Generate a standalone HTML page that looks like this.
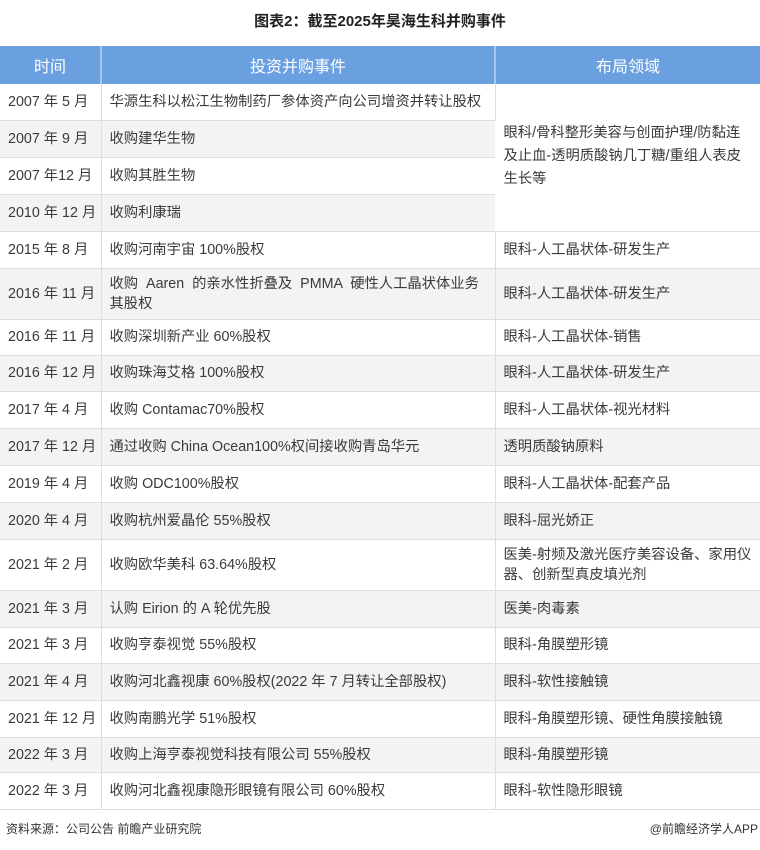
<!DOCTYPE html>
<html><head><meta charset="utf-8"><style>
body{margin:0;width:760px;height:850px;background:#fff;font-family:"Liberation Sans","Noto Sans CJK SC",sans-serif;color:#3a3a3a;position:relative;overflow:hidden}
h1{position:absolute;top:10px;left:0;width:760px;text-align:center;font-size:15px;font-weight:bold;margin:0;color:#222;font-family:"Liberation Sans","Noto Sans CJK SC",sans-serif}
table{position:absolute;top:46px;left:0;width:760px;border-collapse:collapse;font-size:14.3px;table-layout:fixed}
th{background:#6a9fe0;color:#fff;font-weight:normal;font-size:16px;height:36px;border-right:2px solid #a9c8ee}
th:last-child{border-right:none}
td{border-bottom:1px solid #dedede;border-right:1px solid #dedede;padding:0 8px;line-height:20px}
td:last-child{border-right:none}
td.t{padding:0 0 0 8px;white-space:nowrap}
td.n{white-space:nowrap;padding-right:0}
tr.g td{background:#f3f3f3}
td.m{background:#fff!important;vertical-align:top;padding-top:38px;padding-right:4px;line-height:23px;white-space:nowrap}
.f{position:absolute;top:820px;font-size:12px;color:#333}
</style></head><body>
<h1>图表2：截至2025年昊海生科并购事件</h1>
<table>
<colgroup><col style="width:101px"><col style="width:394px"><col style="width:265px"></colgroup>
<tr><th>时间</th><th>投资并购事件</th><th>布局领域</th></tr>
<tr style="height:36px"><td class="t">2007 年 5 月</td><td class="n">华源生科以松江生物制药厂参体资产向公司增资并转让股权</td><td class="m" rowspan="4">眼科/骨科整形美容与创面护理/防黏连<br>及止血-透明质酸钠几丁糖/重组人表皮<br>生长等</td></tr>
<tr class="g" style="height:37px"><td class="t">2007 年 9 月</td><td>收购建华生物</td></tr>
<tr style="height:37px"><td class="t">2007 年12 月</td><td>收购其胜生物</td></tr>
<tr class="g" style="height:37px"><td class="t">2010 年 12 月</td><td>收购利康瑞</td></tr>
<tr style="height:37px"><td class="t">2015 年 8 月</td><td>收购河南宇宙 100%股权</td><td>眼科-人工晶状体-研发生产</td></tr>
<tr class="g" style="height:51px"><td class="t">2016 年 11 月</td><td>收购 &nbsp;Aaren &nbsp;的亲水性折叠及 &nbsp;PMMA &nbsp;硬性人工晶状体业务<br>其股权</td><td>眼科-人工晶状体-研发生产</td></tr>
<tr style="height:36px"><td class="t">2016 年 11 月</td><td>收购深圳新产业 60%股权</td><td>眼科-人工晶状体-销售</td></tr>
<tr class="g" style="height:36px"><td class="t">2016 年 12 月</td><td>收购珠海艾格 100%股权</td><td>眼科-人工晶状体-研发生产</td></tr>
<tr style="height:37px"><td class="t">2017 年 4 月</td><td>收购 Contamac70%股权</td><td>眼科-人工晶状体-视光材料</td></tr>
<tr class="g" style="height:37px"><td class="t">2017 年 12 月</td><td>通过收购 China Ocean100%权间接收购青岛华元</td><td>透明质酸钠原料</td></tr>
<tr style="height:37px"><td class="t">2019 年 4 月</td><td>收购 ODC100%股权</td><td>眼科-人工晶状体-配套产品</td></tr>
<tr class="g" style="height:37px"><td class="t">2020 年 4 月</td><td>收购杭州爱晶伦 55%股权</td><td>眼科-屈光娇正</td></tr>
<tr style="height:51px"><td class="t">2021 年 2 月</td><td>收购欧华美科 63.64%股权</td><td>医美-射频及激光医疗美容设备、家用仪<br>器、创新型真皮填光剂</td></tr>
<tr class="g" style="height:37px"><td class="t">2021 年 3 月</td><td>认购 Eirion 的 A 轮优先股</td><td>医美-肉毒素</td></tr>
<tr style="height:36px"><td class="t">2021 年 3 月</td><td>收购亨泰视觉 55%股权</td><td>眼科-角膜塑形镜</td></tr>
<tr class="g" style="height:37px"><td class="t">2021 年 4 月</td><td>收购河北鑫视康 60%股权(2022 年 7 月转让全部股权)</td><td>眼科-软性接触镜</td></tr>
<tr style="height:37px"><td class="t">2021 年 12 月</td><td>收购南鹏光学 51%股权</td><td>眼科-角膜塑形镜、硬性角膜接触镜</td></tr>
<tr class="g" style="height:35px"><td class="t">2022 年 3 月</td><td>收购上海亨泰视觉科技有限公司 55%股权</td><td>眼科-角膜塑形镜</td></tr>
<tr style="height:37px"><td class="t">2022 年 3 月</td><td>收购河北鑫视康隐形眼镜有限公司 60%股权</td><td>眼科-软性隐形眼镜</td></tr>
</table>
<div class="f" style="left:6px">资料来源：公司公告 前瞻产业研究院</div>
<div class="f" style="right:2px">@前瞻经济学人APP</div>
</body></html>
